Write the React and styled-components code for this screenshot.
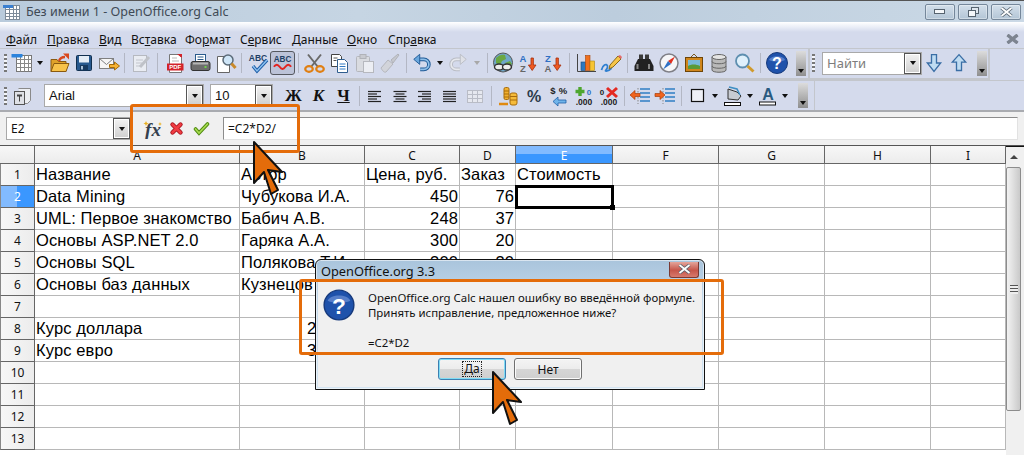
import React from 'react';
import styled, { createGlobalStyle } from 'styled-components';

const GlobalStyle = createGlobalStyle`
  html, body { margin: 0; padding: 0; background: #fff; }
  body { font-family: "Noto Sans", "Liberation Sans", sans-serif; font-size: 12px; color: #000; }
`;

const ORANGE = '#e46c0a';

const Page = styled.div`
  position: relative;
  width: 1024px;
  height: 455px;
  overflow: hidden;
  display: flex;
  flex-direction: column;
`;

/* title bar */
const TitleBar = styled.div`
  height: 21px;
  flex: none;
  display: flex;
  align-items: center;
  border-top: 1px solid #555;
  padding: 0 3px 0 2px;
  background: linear-gradient(90deg, #b9cbdc 0%, #c6d5e3 35%, #bccddd 60%, #cbd9e6 100%);
`;
const TitleText = styled.span`
  margin-left: 6px;
  color: #3f4a55;
  font-size: 12.5px;
  flex: 1;
`;
const WinButtons = styled.div`
  display: flex;
  gap: 3px;
  margin-top: 1px;
`;
const WinButton = styled.div`
  width: 30px;
  height: 16px;
  box-sizing: border-box;
  display: flex;
  align-items: center;
  justify-content: center;
  border: 1px solid #75879a;
  border-radius: 2px;
  background: linear-gradient(#d3dfea, #b3c5d6);
  box-shadow: inset 0 0 0 1px rgba(255, 255, 255, .35);
`;

/* menu */
const MenuBar = styled.div`
  height: 26px;
  flex: none;
  display: flex;
  align-items: center;
  padding: 8px 0 0 6px;
  box-sizing: border-box;
  background: linear-gradient(#fff 0, #e6eaf5 6px, #d4daec 10px, #d4daec 100%);
`;
const MenuItem = styled.span`
  width: ${p => p.$w}px;
  font-size: 12px;
  color: #111;
  u { text-underline-offset: 1px; }
`;
const MenuClose = styled.span`
  margin-left: auto;
  margin-right: 5px;
  display: flex;
`;

/* toolbars */
const ToolRow = styled.div`
  flex: none;
  height: 32px;
  display: flex;
  box-sizing: border-box;
  background: #d4daec;
  border-top: 1px solid #c3c6cc;
  border-bottom: ${p => (p.$last ? '2px solid #a9abb0' : '0')};
`;
const Toolbar = styled.div`
  width: ${p => p.$w}px;
  flex: none;
  display: flex;
  align-items: center;
  box-sizing: border-box;
  background: #d4daec;
  padding-bottom: ${p => (p.$edge ? 1 : 0)}px;
  border-right: ${p => (p.$edge ? '2px solid #c3c6cc' : '1px solid #c3c6cc')};
  border-bottom: ${p => (p.$edge ? '2px solid #c3c6cc' : '0')};
`;
const Grip = styled.div`
  width: 3px;
  height: 18px;
  margin: 0 ${p => p.$after || 5}px 0 ${p => p.$before || 4}px;
  flex: none;
  background: repeating-linear-gradient(#777 0 2px, #f4f6fb 2px 4px);
`;
const Slot = styled.div`
  width: ${p => p.$w || 25}px;
  height: 24px;
  flex: none;
  display: flex;
  align-items: center;
  justify-content: center;
  box-sizing: border-box;
  ${p => p.$active && `
    background: #bcc3d8;
    border: 1px solid #55585f;
    border-radius: 3px;
  `}
`;
const Sep = styled.div`
  width: ${p => p.$w || 6}px;
  height: 20px;
  flex: none;
  &::after {
    content: '';
    display: block;
    width: 1px;
    height: 100%;
    margin: 0 auto;
    background: #b3b7c4;
  }
`;
const Caret = styled.span`
  width: 0;
  height: 0;
  border-left: 3.5px solid transparent;
  border-right: 3.5px solid transparent;
  border-top: 4px solid ${p => (p.$off ? '#a8a8a8' : '#111')};
`;
const Overflow = styled.div`
  width: 10px;
  height: 25px;
  margin-left: ${p => p.$gap || 7}px;
  flex: none;
  display: flex;
  align-items: flex-end;
  justify-content: center;
  padding-bottom: 3px;
  box-sizing: border-box;
  background: linear-gradient(#dcdcdc, #8f8f8f);
`;

const Combo = styled.div`
  width: ${p => p.$w}px;
  height: 23px;
  margin-right: ${p => p.$mr || 0}px;
  flex: none;
  display: flex;
  box-sizing: border-box;
  background: #fff;
  border: 1px solid #a9a9a9;
  font-family: ${p => (p.$cell ? '"Liberation Sans"' : '"Noto Sans"')}, sans-serif;
  font-size: 13px;
  color: ${p => p.$color || '#111'};
  line-height: 21px;
`;
const ComboText = styled.span`
  flex: 1;
  padding-left: 4px;
`;
const ComboButton = styled.span`
  width: 17px;
  flex: none;
  display: flex;
  align-items: center;
  justify-content: center;
  box-sizing: border-box;
  border: 1px solid #555;
  box-shadow: inset 0 0 0 1px #fff;
  background: linear-gradient(#f2f2f2, #cfcfcf);
`;
const StyleLetter = styled.span`
  font-family: "Liberation Serif", serif;
  font-weight: bold;
  font-size: 17px;
  font-style: ${p => (p.$italic ? 'italic' : 'normal')};
  text-decoration: ${p => (p.$under ? 'underline' : 'none')};
  color: #111;
`;

/* formula bar */
const FormulaBar = styled.div`
  height: 33px;
  flex: none;
  display: flex;
  align-items: center;
  padding-left: 6px;
  box-sizing: border-box;
  background: #f0f0f0;
`;
const NameBox = styled(Combo)`
  font-family: "Noto Sans", sans-serif;
  font-size: 12px;
`;
const FormulaInput = styled.div`
  width: 795px;
  height: 23px;
  margin-left: 8px;
  flex: none;
  box-sizing: border-box;
  padding-left: 4px;
  background: #fff;
  border-top: 1px solid #8c8c8c;
  border-left: 1px solid #8c8c8c;
  border-bottom: 1px solid #e2e2e2;
  border-right: 1px solid #e2e2e2;
  font-size: 12px;
  line-height: 21px;
  color: #111;
`;

/* sheet */
const SheetArea = styled.div`
  flex: 1;
  min-height: 0;
  display: flex;
  overflow: hidden;
  border-top: 1px solid #555;
`;
const Grid = styled.div`
  width: 1006px;
  flex: none;
  display: grid;
  grid-template-columns: 35px 205px 125px 95px 56px 97px 106px 106px 106px 75px;
  grid-auto-rows: 22px;
  grid-template-rows: 18px;
  font-family: "Liberation Sans", sans-serif;
  font-size: 16.5px;
  letter-spacing: .12px;
`;
const ColHead = styled.div`
  box-sizing: border-box;
  display: flex;
  align-items: center;
  justify-content: center;
  font-family: "Noto Sans", sans-serif;
  font-size: 12px;
  letter-spacing: 0;
  padding-top: 1px;
  border-right: 1px solid #666;
  border-bottom: 1px solid #666;
  color: ${p => (p.$selected ? '#fff' : '#111')};
  background: ${p => (p.$selected
    ? 'linear-gradient(#82bbff 0, #82bbff 50%, #3a97ff 50%, #3a97ff 100%)'
    : 'linear-gradient(#f7f7f7, #ececec)')};
`;
const RowHead = styled(ColHead)`
  background: ${p => (p.$selected
    ? 'linear-gradient(90deg, #82bbff 0, #82bbff 50%, #3a97ff 50%, #3a97ff 100%)'
    : 'linear-gradient(90deg, #f7f7f7, #ececec)')};
  border-left: 1px solid #888;
  padding-top: 0;
`;
const Cell = styled.div`
  position: relative;
  box-sizing: border-box;
  border-right: 1px solid #b8b8b8;
  border-bottom: 1px solid #b8b8b8;
  padding: 0 1px;
  line-height: 21px;
  white-space: nowrap;
  color: #000;
  text-align: ${p => (p.$right ? 'right' : 'left')};
  z-index: ${p => (p.$selected ? 1 : 0)};
  ${p => p.$selected && `
    outline: 3px solid #000;
    outline-offset: -2px;
    &::after {
      content: '';
      position: absolute;
      right: -3px;
      bottom: -3px;
      width: 5px;
      height: 5px;
      background: #000;
    }
  `}
`;
const ScrollBar = styled.div`
  flex: 1;
  display: flex;
  flex-direction: column;
  align-items: stretch;
  background: #f0f0f0;
  border-top: 2px solid #111;
  margin-top: -1px;
  padding-right: 3px;
`;
const ScrollUp = styled.div`
  height: 20px;
  flex: none;
  display: flex;
  align-items: center;
  justify-content: center;
`;
const ScrollArrow = styled.span`
  width: 0;
  height: 0;
  border-left: 4px solid transparent;
  border-right: 4px solid transparent;
  border-bottom: 4px solid #444;
`;
const ScrollThumb = styled.div`
  height: 244px;
  flex: none;
  box-sizing: border-box;
  display: flex;
  align-items: center;
  justify-content: center;
  border: 1px solid #8c8c8c;
  border-radius: 2px;
  background: linear-gradient(90deg, #f2f2f2, #dedede 50%, #c9c9c9);
`;
const ThumbGrip = styled.span`
  width: 8px;
  height: 9px;
  background: repeating-linear-gradient(#555 0 1px, #eee 1px 3px);
`;

/* overlays */
const Highlight = styled.div`
  position: absolute;
  left: ${p => p.$x}px;
  top: ${p => p.$y}px;
  width: ${p => p.$w}px;
  height: ${p => p.$h}px;
  box-sizing: border-box;
  border: 3px solid ${ORANGE};
  border-radius: 3px;
  z-index: 6;
`;
const Pointer = styled.svg`
  position: absolute;
  left: ${p => p.$x}px;
  top: ${p => p.$y}px;
  z-index: 7;
`;

/* dialog */
const Dialog = styled.div`
  position: absolute;
  left: 315px;
  top: 259px;
  width: 390px;
  height: 131px;
  box-sizing: border-box;
  z-index: 5;
  display: flex;
  flex-direction: column;
  border: 1px solid #111;
  border-radius: 6px 6px 0 0;
  background: linear-gradient(#a9c4dc, #c3d8ea 30%, #d3e4f2);
  padding: 0 2px 2px;
  box-shadow: inset 0 0 0 1px rgba(255, 255, 255, .55);
`;
const DialogTitle = styled.div`
  height: 22px;
  flex: none;
  display: flex;
  align-items: center;
  padding-left: 3px;
  font-size: 12.8px;
  color: #111;
`;
const DialogClose = styled.div`
  width: 30px;
  height: 16px;
  margin: -3px 3px 0 auto;
  display: flex;
  align-items: center;
  justify-content: center;
  box-sizing: border-box;
  border: 1px solid #7a3a34;
  border-top: 0;
  border-radius: 0 0 3px 3px;
  background: linear-gradient(#e4a59b, #c6564a 55%, #d77a6d);
`;
const DialogBody = styled.div`
  flex: 1;
  display: flex;
  flex-direction: column;
  background: #f0f0f0;
`;
const MessageRow = styled.div`
  display: flex;
  padding: 8px 0 0 4px;
  height: 76px;
  box-sizing: border-box;
`;
const MessageIcon = styled.div`
  margin-top: -2px;
`;
const MessageText = styled.div`
  margin-left: 12px;
  font-size: 11.42px;
  line-height: 15px;
  color: #111;
  white-space: pre;
`;
const ButtonRow = styled.div`
  display: flex;
  justify-content: center;
  gap: 8px;
`;
const DialogButton = styled.div`
  width: 68px;
  height: 22px;
  box-sizing: border-box;
  display: flex;
  align-items: center;
  justify-content: center;
  font-size: 12px;
  color: #111;
  border-radius: 3px;
  border: 1px solid ${p => (p.$primary ? '#3c7fb1' : '#707070')};
  background: linear-gradient(#f4f4f4, #ececec 50%, #d6d6d6 50%, #cfcfcf);
  box-shadow: inset 0 0 0 1px ${p => (p.$primary ? '#7fdcf5' : '#fbfbfb')};
`;
const FocusLabel = styled.span`
  padding: 0 1px;
  outline: 1px dotted #222;
  line-height: 14px;
  u { text-underline-offset: 1px; }
`;

/* icons */
const Svg = ({ children, size = 24, view = 24 }) => (
  <svg width={size} height={size} viewBox={`0 0 ${view} ${view}`} fill="none">{children}</svg>
);
const TinyText = styled.text`
  font-family: "Liberation Sans", sans-serif;
  font-weight: bold;
`;

const SheetIcon = () => (
  <Svg size={18} view={18}>
    <rect x="3.500" y="2.500" width="14" height="14" fill="#fff" stroke="#7d8b99" />
    <path d="M3.500 6.500h14M3.500 10.500h14M3.500 13.500h14M7.500 2.500v14M11.500 2.500v14M14.500 2.500v14" stroke="#7d8b99" />
    <rect x="1" y="2" width="10" height="3" fill="#3a7fd0" />
  </Svg>
);
const NewIcon = () => (
  <Svg>
    <rect x="6.500" y="4.500" width="15" height="16" fill="#fff" stroke="#777" />
    <path d="M6.500 8.500h15M6.500 12.500h15M6.500 16.500h15M10.500 4.500v16M14.500 4.500v16M18.500 4.500v16" stroke="#888" />
    <rect x="1.500" y="3" width="11" height="3.500" fill="#2b83dd" />
  </Svg>
);
const OpenIcon = () => (
  <Svg>
    <path d="M4 8.500h6l1.500 2H19v10H4z" fill="#e0a22a" stroke="#8a5a10" />
    <path d="M4 20.500l3-8h15l-3 8z" fill="#f8c34a" stroke="#8a5a10" />
    <path d="M12 10c1-3 3-4 6-4" stroke="#d9481e" strokeWidth="2.400" />
    <path d="M16 2.500h6v6z" fill="#d9481e" />
  </Svg>
);
const SaveIcon = () => (
  <Svg>
    <rect x="4.500" y="4.500" width="15" height="15" rx="1" fill="#27598e" stroke="#12304f" />
    <rect x="7" y="5" width="10" height="6.500" fill="#e4edf6" />
    <rect x="8" y="14" width="8" height="5.500" fill="#16395f" />
    <rect x="9" y="15" width="2" height="3.500" fill="#a9c0d6" />
  </Svg>
);
const MailIcon = () => (
  <Svg>
    <rect x="2.500" y="7.500" width="14" height="10" fill="#f6f6f6" stroke="#808080" />
    <path d="M2.500 7.500l7 6 7-6" stroke="#808080" />
    <path d="M12.500 13.500h5V11l5 4-5 4v-2.500h-5z" fill="#f7b334" stroke="#a56b08" />
  </Svg>
);
const EditIcon = () => (
  <Svg>
    <rect x="5.500" y="4.500" width="13" height="16" fill="#e9ecf2" stroke="#b6b9c0" />
    <path d="M8 9h7M8 12h6M8 15h5" stroke="#c2c5cc" />
    <path d="M12 16l9-10" stroke="#bfc2c8" strokeWidth="3" />
  </Svg>
);
const PdfIcon = () => (
  <Svg>
    <path d="M6.500 3.500h9l3 3v15h-12z" fill="#fff" stroke="#777" />
    <path d="M14 3h5v4z" fill="#d3232a" />
    <path d="M9 7h5M9 10h7" stroke="#b8b8b8" />
    <rect x="4" y="12.500" width="16.500" height="7" fill="#d3232a" />
    <TinyText x="12.200" y="18.200" fontSize="6" fill="#fff" textAnchor="middle">PDF</TinyText>
  </Svg>
);
const PrintIcon = () => (
  <Svg>
    <rect x="7.500" y="3.500" width="10" height="8" fill="#fff" stroke="#2a5b8c" />
    <path d="M9.500 6h6M9.500 8.500h6" stroke="#2a5b8c" />
    <rect x="3" y="10.500" width="19" height="9" rx="2" fill="#6d6d6d" stroke="#333" />
    <rect x="5" y="11.500" width="15" height="2" fill="#b5b5b5" />
    <rect x="16.500" y="15" width="2" height="2" fill="#6fd04a" />
  </Svg>
);
const PreviewIcon = () => (
  <Svg>
    <path d="M4.500 5.500h9l3 3v13h-12z" fill="#fff" stroke="#666" />
    <circle cx="15" cy="9" r="5" fill="#cfe6f8" stroke="#5a6a78" strokeWidth="1.500" />
    <path d="M18.500 12.500l4 4.500" stroke="#c98a2b" strokeWidth="3" />
  </Svg>
);
const SpellIcon = () => (
  <Svg>
    <TinyText x="12" y="10" fontSize="8.500" fill="#1f3f66" textAnchor="middle">ABC</TinyText>
    <path d="M7 15l4 5 10-11" stroke="#1f5fa8" strokeWidth="3.400" />
    <path d="M7 15l4 5 10-11" stroke="#8ec2f0" strokeWidth="1.400" />
  </Svg>
);
const AutoSpellIcon = () => (
  <Svg>
    <TinyText x="12" y="11" fontSize="8.500" fill="#1f3f66" textAnchor="middle">ABC</TinyText>
    <path d="M3 16c2-3 4-3 6 0s4 3 6 0 4-3 6 0" stroke="#e2231f" strokeWidth="2" />
  </Svg>
);
const CutIcon = () => (
  <Svg>
    <path d="M6 3.500L16 16M19 3.500L9 16" stroke="#6a6a6a" strokeWidth="2" />
    <ellipse cx="7" cy="18" rx="3.800" ry="2.800" stroke="#e07f12" strokeWidth="2.200" />
    <ellipse cx="18" cy="18" rx="3.800" ry="2.800" stroke="#e07f12" strokeWidth="2.200" />
  </Svg>
);
const CopyIcon = () => (
  <Svg>
    <path d="M4.500 3.500h8l2 2v10h-10z" fill="#fff" stroke="#444" />
    <path d="M10.500 8.500h7l3 3v10h-10z" fill="#fff" stroke="#2f5d8e" />
    <path d="M12.500 13h6M12.500 15.500h6M12.500 18h6" stroke="#2f78c4" />
    <path d="M6.500 7h4M6.500 9.500h3" stroke="#555" />
  </Svg>
);
const PasteIcon = () => (
  <Svg>
    <rect x="4.500" y="5.500" width="13" height="15" rx="1" fill="#d9dbe0" stroke="#b4b6bc" />
    <rect x="8" y="3.500" width="6" height="4" fill="#c8cad0" stroke="#b0b2b8" />
    <rect x="11.500" y="10.500" width="10" height="11" fill="#eceef3" stroke="#b6b8be" />
  </Svg>
);
const BrushIcon = () => (
  <Svg>
    <path d="M14 9l7-6 1 1-6 8z" fill="#c6c8ce" stroke="#b0b2b8" />
    <path d="M4 17l7-8 5 4-7 8c-2 1-4-2-5-4z" fill="#d2d4da" stroke="#b4b6bc" />
  </Svg>
);
const UndoIcon = () => (
  <Svg>
    <path d="M6 8h8a5.500 5.500 0 0 1 0 11h-4" stroke="#1f5a96" strokeWidth="4" />
    <path d="M6 8h8a5.500 5.500 0 0 1 0 11h-4" stroke="#8fc0ea" strokeWidth="1.800" />
    <path d="M9.500 2.500L3 8l6.500 5.500z" fill="#6aa7dd" stroke="#1f5a96" />
  </Svg>
);
const RedoIcon = () => (
  <Svg>
    <g transform="matrix(-1 0 0 1 24 0)">
      <path d="M6 8h8a5.500 5.500 0 0 1 0 11h-4" stroke="#b9bcc4" strokeWidth="4" />
      <path d="M6 8h8a5.500 5.500 0 0 1 0 11h-4" stroke="#e6e8ee" strokeWidth="1.800" />
      <path d="M9.500 2.500L3 8l6.500 5.500z" fill="#dfe1e7" stroke="#b9bcc4" />
    </g>
  </Svg>
);
const GlobeIcon = () => (
  <Svg>
    <circle cx="12" cy="11.500" r="9.500" fill="#6fa7c8" stroke="#555" />
    <path d="M5 7c3-3 6-4 9-3l1 4-4 2-2 4-4-2zM14 12l5-2 2 3-4 3z" fill="#6aa742" />
    <ellipse cx="8" cy="16" rx="4.500" ry="3" fill="#eee" stroke="#333" strokeWidth="1.400" />
    <ellipse cx="16" cy="16" rx="4.500" ry="3" fill="#eee" stroke="#333" strokeWidth="1.400" />
  </Svg>
);
const SortIcon = ({ top, bottom, topColor, bottomColor }) => (
  <Svg>
    <TinyText x="7" y="11" fontSize="9.500" fill={topColor} textAnchor="middle">{top}</TinyText>
    <TinyText x="7" y="21" fontSize="9.500" fill={bottomColor} textAnchor="middle">{bottom}</TinyText>
    <path d="M15 7h2.400v7h2.600l-3.800 5.500L12.400 14H15z" fill="#ef5a22" stroke="#a52e0c" strokeWidth=".8" />
  </Svg>
);
const ChartIcon = () => (
  <Svg>
    <path d="M3.500 3v17.500H22" stroke="#444" />
    <rect x="7" y="11" width="4.500" height="8.500" fill="#2c78c0" stroke="#174a7c" strokeWidth=".6" />
    <rect x="11.500" y="4.500" width="4.500" height="15" fill="#f0701e" stroke="#a84409" strokeWidth=".6" />
    <rect x="16" y="10" width="4.500" height="9.500" fill="#f7c432" stroke="#a88212" strokeWidth=".6" />
  </Svg>
);
const DrawIcon = () => (
  <Svg>
    <path d="M2.500 19c1-5 5-7 6-4s-4 5-1 5 4-2 5-3" stroke="#2f7fd0" strokeWidth="1.800" />
    <path d="M11 14l8-9 3 3-8 8-4 2z" fill="#f6c548" stroke="#8a6a1a" />
    <path d="M19 5l3 3 1-2-2-2z" fill="#e46a6a" />
  </Svg>
);
const BinocularsIcon = () => (
  <Svg>
    <rect x="7" y="3.500" width="4" height="5" fill="#3a3a3a" />
    <rect x="13" y="3.500" width="4" height="5" fill="#3a3a3a" />
    <path d="M6 8h6v12H2.500v-5z" fill="#222" />
    <path d="M18 8h-6v12h9.500v-5z" fill="#222" />
    <rect x="4.500" y="13" width="2" height="5" fill="#888" />
    <rect x="16" y="13" width="2" height="5" fill="#888" />
  </Svg>
);
const CompassIcon = () => (
  <Svg>
    <circle cx="12" cy="12" r="9" fill="#f6f6f8" stroke="#7f7f86" strokeWidth="1.500" />
    <path d="M18 5.500l-7 4.500 3 3z" fill="#e03020" />
    <path d="M6 18.500l5-8.500 3 3z" fill="#2f70c4" />
  </Svg>
);
const GalleryIcon = () => (
  <Svg>
    <path d="M8 7l4-4 4 4" stroke="#7a5a20" />
    <rect x="3.500" y="6.500" width="17" height="14" fill="#d0861c" stroke="#6f4507" />
    <rect x="6" y="9" width="12" height="9" fill="#79b9d6" />
    <path d="M6 18v-3c3-2 8-2 12 0v3z" fill="#5a9a36" />
  </Svg>
);
const DatabaseIcon = () => (
  <Svg>
    <path d="M5 6v13c0 3 14 3 14 0V6z" fill="#b9b9b9" stroke="#666" />
    <ellipse cx="12" cy="6" rx="7" ry="2.500" fill="#e4e4e4" stroke="#666" />
    <path d="M5 10.500c0 3 14 3 14 0M5 15c0 3 14 3 14 0" stroke="#666" />
  </Svg>
);
const ZoomIcon = () => (
  <Svg>
    <circle cx="10.500" cy="10" r="6.500" fill="#dff0fb" stroke="#5e8fb0" strokeWidth="1.800" />
    <path d="M15.500 15l6 5.500" stroke="#d09a2c" strokeWidth="3" />
  </Svg>
);
const HelpIcon = ({ size = 24 }) => (
  <Svg size={size}>
    <circle cx="12" cy="12" r="10.500" fill="#1f52ab" stroke="#173a7c" />
    <path d="M4 9c2-5 14-5 16 0-4 2-12 2-16 0z" fill="#6f93d6" opacity=".7" />
    <TinyText x="12" y="18" fontSize="16" fill="#fff" textAnchor="middle">?</TinyText>
  </Svg>
);
const FindArrow = ({ up }) => (
  <Svg size={20}>
    <path
      d={up ? 'M12 2l8 9h-5v10H9V11H4z' : 'M9 2h6v10h5l-8 10-8-10h5z'}
      fill="#bfdcf2"
      stroke="#3a6ea5"
      strokeWidth="1.600"
    />
  </Svg>
);
const StylesIcon = () => (
  <Svg>
    <path d="M8.500 4.500h12v12l-3 3h-4" fill="#eceef2" stroke="#8a8a8a" />
    <rect x="4.500" y="7.500" width="10" height="13" fill="#dfe1e6" stroke="#555" />
    <path d="M7 10.500h5v2H10v5H9v-5H7z" fill="#444" />
  </Svg>
);
const AlignIcon = ({ mode }) => {
  const rows = [0, 1, 2, 3, 4];
  const line = i => {
    const w = mode === 'full' || i % 2 === 0 ? 13 : 9;
    const x = mode === 'left' || mode === 'full' ? 5 : mode === 'center' ? 12 - w / 2 : 18 - w;
    return `M${x} ${7.500 + i * 2.500}h${w}`;
  };
  return <Svg>{rows.map(i => <path key={i} d={line(i)} stroke="#222" strokeWidth="1.200" />)}</Svg>;
};
const MergeIcon = () => (
  <Svg>
    <rect x="4.500" y="6.500" width="15" height="12" fill="#e6e8ef" stroke="#b9bcc6" />
    <path d="M4.500 10.500h15M4.500 14.500h15M9.500 6.500v12M14.500 6.500v12" stroke="#b9bcc6" />
  </Svg>
);
const CoinsIcon = () => (
  <Svg>
    <path d="M2 20h9" stroke="#e08a12" strokeWidth="2.500" />
    <rect x="7" y="3.500" width="5" height="12" rx="1.500" fill="#f2b02e" stroke="#a86c0c" />
    <path d="M7 7h5M7 10h5M7 13h5" stroke="#a86c0c" />
    <rect x="13" y="9" width="7" height="12" rx="2" fill="#f5bb3b" stroke="#a86c0c" />
    <path d="M13 12.500h7M13 16h7" stroke="#a86c0c" />
  </Svg>
);
const PercentIcon = () => (
  <Svg>
    <TinyText x="12" y="18" fontSize="16" fill="#2b3a4a" textAnchor="middle">%</TinyText>
  </Svg>
);
const MoneyIcon = () => (
  <Svg>
    <TinyText x="6" y="10" fontSize="9.500" fill="#222" textAnchor="middle">$</TinyText>
    <TinyText x="16" y="10" fontSize="9.500" fill="#222" textAnchor="middle">%</TinyText>
    <path d="M19 16h-8v-3l-5 4.500 5 4.500v-3h8z" fill="#6fb4ea" stroke="#1f5fa8" strokeWidth=".8" />
  </Svg>
);
const DecimalIcon = ({ remove }) => (
  <Svg>
    {remove ? (
      <path d="M10 4l10 9M20 4l-10 9" stroke="#e42a22" strokeWidth="3" />
    ) : (
      <path d="M8 3v9M3.500 7.500h9" stroke="#4ea62e" strokeWidth="3.400" />
    )}
    <TinyText x={remove ? 5 : 17} y="11" fontSize="8" fill={remove ? '#222' : '#2f70c4'} textAnchor="middle">0</TinyText>
    <TinyText x="12" y="21" fontSize="8.500" fill="#222" textAnchor="middle">.000</TinyText>
  </Svg>
);
const IndentIcon = ({ forward }) => (
  <Svg>
    <path d="M12 5h10M12 9h10M12 13h10M12 17h10" stroke="#2f7fc4" strokeWidth="1.400" />
    <path d="M10 4v16" stroke="#888" strokeDasharray="1.500 1.500" />
    <path
      d={forward ? 'M2 9.500h5V6.500l5 4.500-5 4.500v-3H2z' : 'M12 9.500H7V6.500L2 11l5 4.500v-3h5z'}
      fill="#f0641e"
      stroke="#a83c08"
      strokeWidth=".7"
    />
  </Svg>
);
const BorderIcon = () => (
  <Svg>
    <rect x="5.500" y="5.500" width="12" height="12" fill="#eef0f6" stroke="#111" strokeWidth="1.200" />
  </Svg>
);
const FillIcon = () => (
  <Svg>
    <path d="M7 5l9 3 4 4-3 4-10-1z" fill="#c7cbd2" stroke="#333" />
    <path d="M8 3l8 2 3 6" stroke="#3f8fc4" strokeWidth="1.600" />
    <rect x="3.500" y="18.500" width="16" height="3" fill="#fff" stroke="#111" />
  </Svg>
);
const FontColorIcon = () => (
  <Svg>
    <TinyText x="12" y="15.500" fontSize="16" fill="#2a5a80" textAnchor="middle">A</TinyText>
    <rect x="3.500" y="18" width="16" height="3" fill="#fff" stroke="#111" />
  </Svg>
);
const FxIcon = () => (
  <Svg size={20} view={20}>
    <text x="10" y="17" fontSize="19" fontWeight="bold" fontStyle="italic" fontFamily='"Liberation Serif", serif' fill="#35404e" textAnchor="middle">fx</text>
    <path d="M3 2l.8 1.700 1.700.8-1.700.8L3 7l-.8-1.700L.5 4.500l1.700-.8zM17 3l.6 1.400L19 5l-1.400.6L17 7l-.6-1.400L15 5l1.400-.6z" fill="#e8b020" />
  </Svg>
);
const CancelIcon = () => (
  <Svg size={15} view={15}>
    <path d="M3.500 3.500l8 8M11.500 3.500l-8 8" stroke="#a8141e" strokeWidth="4.400" strokeLinecap="round" />
    <path d="M3.500 3.500l8 8M11.500 3.500l-8 8" stroke="#ef3c42" strokeWidth="2.600" strokeLinecap="round" />
  </Svg>
);
const AcceptIcon = () => (
  <Svg size={17} view={17}>
    <path d="M2.500 9l3.500 4L14.500 4" stroke="#4f8a10" strokeWidth="3.600" strokeLinecap="round" />
    <path d="M2.500 9l3.500 4L14.500 4" stroke="#a8dc50" strokeWidth="1.700" strokeLinecap="round" />
  </Svg>
);
const CloseGlyph = ({ fill = '#fff', stroke = '#56636f' }) => (
  <svg width="13" height="10" viewBox="0 0 13 10" fill="none">
    <path d="M1.500 1l10 8M11.500 1l-10 8" stroke={stroke} strokeWidth="3.400" />
    <path d="M1.500 1l10 8M11.500 1l-10 8" stroke={fill} strokeWidth="1.800" />
  </svg>
);
const PointerArrow = ({ x, y }) => (
  <Pointer $x={x - 3} $y={y - 3} width="36" height="60" viewBox="0 0 36 60">
    <path
      d="M3 3v41l10-11 7 22 7-4-10-20 14 2z"
      fill={ORANGE}
      stroke="#111"
      strokeWidth="2"
      strokeLinejoin="round"
    />
  </Pointer>
);

/* data */
const menu = [
  ['Ф', 'айл', 41], ['П', 'равка', 52], ['В', 'ид', 32], ['Вс', 'т', 54, 'авка'], ['Фо', 'р', 55, 'мат'],
  ['С', 'е', 52, 'рвис'], ['Д', 'анные', 55], ['О', 'кно', 41], ['Спр', 'а', 50, 'вка'],
];

const columns = ['A', 'B', 'C', 'D', 'E', 'F', 'G', 'H', 'I'];
const rows = [
  ['Название', 'Автор', 'Цена, руб.', 'Заказ', 'Стоимость'],
  ['Data Mining', 'Чубукова И.А.', '450', '76'],
  ['UML: Первое знакомство', 'Бабич А.В.', '248', '37'],
  ['Основы ASP.NET 2.0', 'Гаряка А.А.', '300', '20'],
  ['Основы SQL', 'Полякова Т.И.', '300', '30'],
  ['Основы баз данных', 'Кузнецов С.Д.'],
  [],
  ['Курс доллара', '28,50р.'],
  ['Курс евро', '39,50р.'],
  [], [], [], [],
];
const isRight = (r, c) => r > 0 && (c === 2 || c === 3 || (c === 1 && r >= 7));

function MenuEntry({ item }) {
  const [lead, mark, width, tail] = item;
  // the mnemonic is either the first letter or a letter inside the word
  if (tail) {
    return <MenuItem $w={width}>{lead}<u>{mark}</u>{tail}</MenuItem>;
  }
  return <MenuItem $w={width}><u>{lead}</u>{mark}</MenuItem>;
}

function Sheet() {
  return (
    <Grid>
      <ColHead />
      {columns.map(c => <ColHead key={c} $selected={c === 'E'}>{c}</ColHead>)}
      {rows.map((row, r) => (
        <React.Fragment key={r}>
          <RowHead $selected={r === 1}>{r + 1}</RowHead>
          {columns.map((c, i) => (
            <Cell key={c} $right={isRight(r, i)} $selected={r === 1 && c === 'E'}>{row[i]}</Cell>
          ))}
        </React.Fragment>
      ))}
    </Grid>
  );
}

export default function App() {
  return (
    <Page>
      <GlobalStyle />

      <TitleBar>
        <SheetIcon />
        <TitleText>Без имени 1 - OpenOffice.org Calc</TitleText>
        <WinButtons>
          <WinButton>
            <svg width="12" height="6" viewBox="0 0 12 6" fill="none"><rect x=".5" y=".5" width="10" height="4" fill="#f4f7fa" stroke="#56636f" /></svg>
          </WinButton>
          <WinButton>
            <svg width="13" height="11" viewBox="0 0 13 11" fill="none">
              <rect x="4.500" y=".5" width="7" height="6" fill="#dfe7ef" stroke="#56636f" />
              <rect x="1.500" y="3.500" width="7" height="6" fill="#f4f7fa" stroke="#56636f" />
            </svg>
          </WinButton>
          <WinButton><CloseGlyph /></WinButton>
        </WinButtons>
      </TitleBar>

      <MenuBar>
        {menu.map(item => <MenuEntry key={item[0] + item[1]} item={item} />)}
        <MenuClose><CloseGlyph fill="#7d8490" stroke="#7d8490" /></MenuClose>
      </MenuBar>

      <ToolRow>
        <Toolbar $w={810} $edge>
          <Grip $after={3} />
          <Slot $w={24}><NewIcon /></Slot>
          <Slot $w={12}><Caret /></Slot>
          <Slot><OpenIcon /></Slot>
          <Slot><SaveIcon /></Slot>
          <Slot><MailIcon /></Slot>
          <Sep />
          <Slot><EditIcon /></Slot>
          <Sep $w={10} />
          <Slot><PdfIcon /></Slot>
          <Slot><PrintIcon /></Slot>
          <Slot><PreviewIcon /></Slot>
          <Sep $w={8} />
          <Slot><SpellIcon /></Slot>
          <Slot $active><AutoSpellIcon /></Slot>
          <Sep />
          <Slot><CutIcon /></Slot>
          <Slot><CopyIcon /></Slot>
          <Slot><PasteIcon /></Slot>
          <Slot><BrushIcon /></Slot>
          <Sep $w={10} />
          <Slot $w={22}><UndoIcon /></Slot>
          <Slot $w={14}><Caret /></Slot>
          <Slot $w={22}><RedoIcon /></Slot>
          <Slot $w={15}><Caret $off /></Slot>
          <Sep />
          <Slot><GlobeIcon /></Slot>
          <Slot><SortIcon top="A" bottom="Z" topColor="#2f70c4" bottomColor="#666" /></Slot>
          <Slot><SortIcon top="Z" bottom="A" topColor="#2f70c4" bottomColor="#666" /></Slot>
          <Sep $w={8} />
          <Slot><ChartIcon /></Slot>
          <Slot><DrawIcon /></Slot>
          <Sep $w={8} />
          <Slot><BinocularsIcon /></Slot>
          <Slot><CompassIcon /></Slot>
          <Slot><GalleryIcon /></Slot>
          <Slot><DatabaseIcon /></Slot>
          <Slot><ZoomIcon /></Slot>
          <Sep $w={8} />
          <Slot><HelpIcon /></Slot>
          <Overflow><Caret /></Overflow>
        </Toolbar>
        <Toolbar $w={180} $edge>
          <Grip $before={2} $after={7} />
          <Combo $w={100} $color="#7d7d7d">
            <ComboText>Найти</ComboText>
            <ComboButton><Caret /></ComboButton>
          </Combo>
          <Slot $w={24}><FindArrow /></Slot>
          <Slot><FindArrow up /></Slot>
          <Overflow $gap={6}><Caret /></Overflow>
        </Toolbar>
      </ToolRow>

      <ToolRow $last>
        <Toolbar $w={815}>
          <Grip $after={3} />
          <Slot $w={24}><StylesIcon /></Slot>
          <Slot $w={10} />
          <Combo $w={160} $mr={6} $cell>
            <ComboText>Arial</ComboText>
            <ComboButton><Caret /></ComboButton>
          </Combo>
          <Combo $w={63} $mr={8} $cell>
            <ComboText>10</ComboText>
            <ComboButton><Caret /></ComboButton>
          </Combo>
          <Slot><StyleLetter>Ж</StyleLetter></Slot>
          <Slot><StyleLetter $italic>К</StyleLetter></Slot>
          <Slot><StyleLetter $under>Ч</StyleLetter></Slot>
          <Sep />
          <Slot><AlignIcon mode="left" /></Slot>
          <Slot><AlignIcon mode="center" /></Slot>
          <Slot><AlignIcon mode="right" /></Slot>
          <Slot><AlignIcon mode="full" /></Slot>
          <Slot><MergeIcon /></Slot>
          <Sep $w={9} />
          <Slot><CoinsIcon /></Slot>
          <Slot><PercentIcon /></Slot>
          <Slot><MoneyIcon /></Slot>
          <Slot><DecimalIcon /></Slot>
          <Slot><DecimalIcon remove /></Slot>
          <Sep />
          <Slot><IndentIcon /></Slot>
          <Slot><IndentIcon forward /></Slot>
          <Sep $w={8} />
          <Slot><BorderIcon /></Slot>
          <Slot $w={10}><Caret /></Slot>
          <Slot><FillIcon /></Slot>
          <Slot $w={10}><Caret /></Slot>
          <Slot><FontColorIcon /></Slot>
          <Slot $w={10}><Caret /></Slot>
          <Overflow $gap={8}><Caret /></Overflow>
        </Toolbar>
      </ToolRow>

      <FormulaBar>
        <NameBox $w={125} $mr={10}>
          <ComboText>E2</ComboText>
          <ComboButton><Caret /></ComboButton>
        </NameBox>
        <Slot $w={24}><FxIcon /></Slot>
        <Slot $w={22}><CancelIcon /></Slot>
        <Slot $w={28}><AcceptIcon /></Slot>
        <FormulaInput>=C2*D2/</FormulaInput>
      </FormulaBar>

      <SheetArea>
        <Sheet />
        <ScrollBar>
          <ScrollUp><ScrollArrow /></ScrollUp>
          <ScrollThumb><ThumbGrip /></ScrollThumb>
        </ScrollBar>
      </SheetArea>

      <Highlight $x={130} $y={104} $w={170} $h={49} />
      <Highlight $x={299} $y={279} $w={425} $h={76} />
      <PointerArrow x={254} y={142} />
      <PointerArrow x={493} y={372} />

      <Dialog>
        <DialogTitle>
          OpenOffice.org 3.3
          <DialogClose><CloseGlyph /></DialogClose>
        </DialogTitle>
        <DialogBody>
          <MessageRow>
            <MessageIcon><HelpIcon size={34} /></MessageIcon>
            <MessageText>
              {'OpenOffice.org Calc нашел ошибку во введённой формуле.\nПринять исправление, предложенное ниже?\n\n=C2*D2'}
            </MessageText>
          </MessageRow>
          <ButtonRow>
            <DialogButton $primary><FocusLabel><u>Д</u>а</FocusLabel></DialogButton>
            <DialogButton>Нет</DialogButton>
          </ButtonRow>
        </DialogBody>
      </Dialog>
    </Page>
  );
}
